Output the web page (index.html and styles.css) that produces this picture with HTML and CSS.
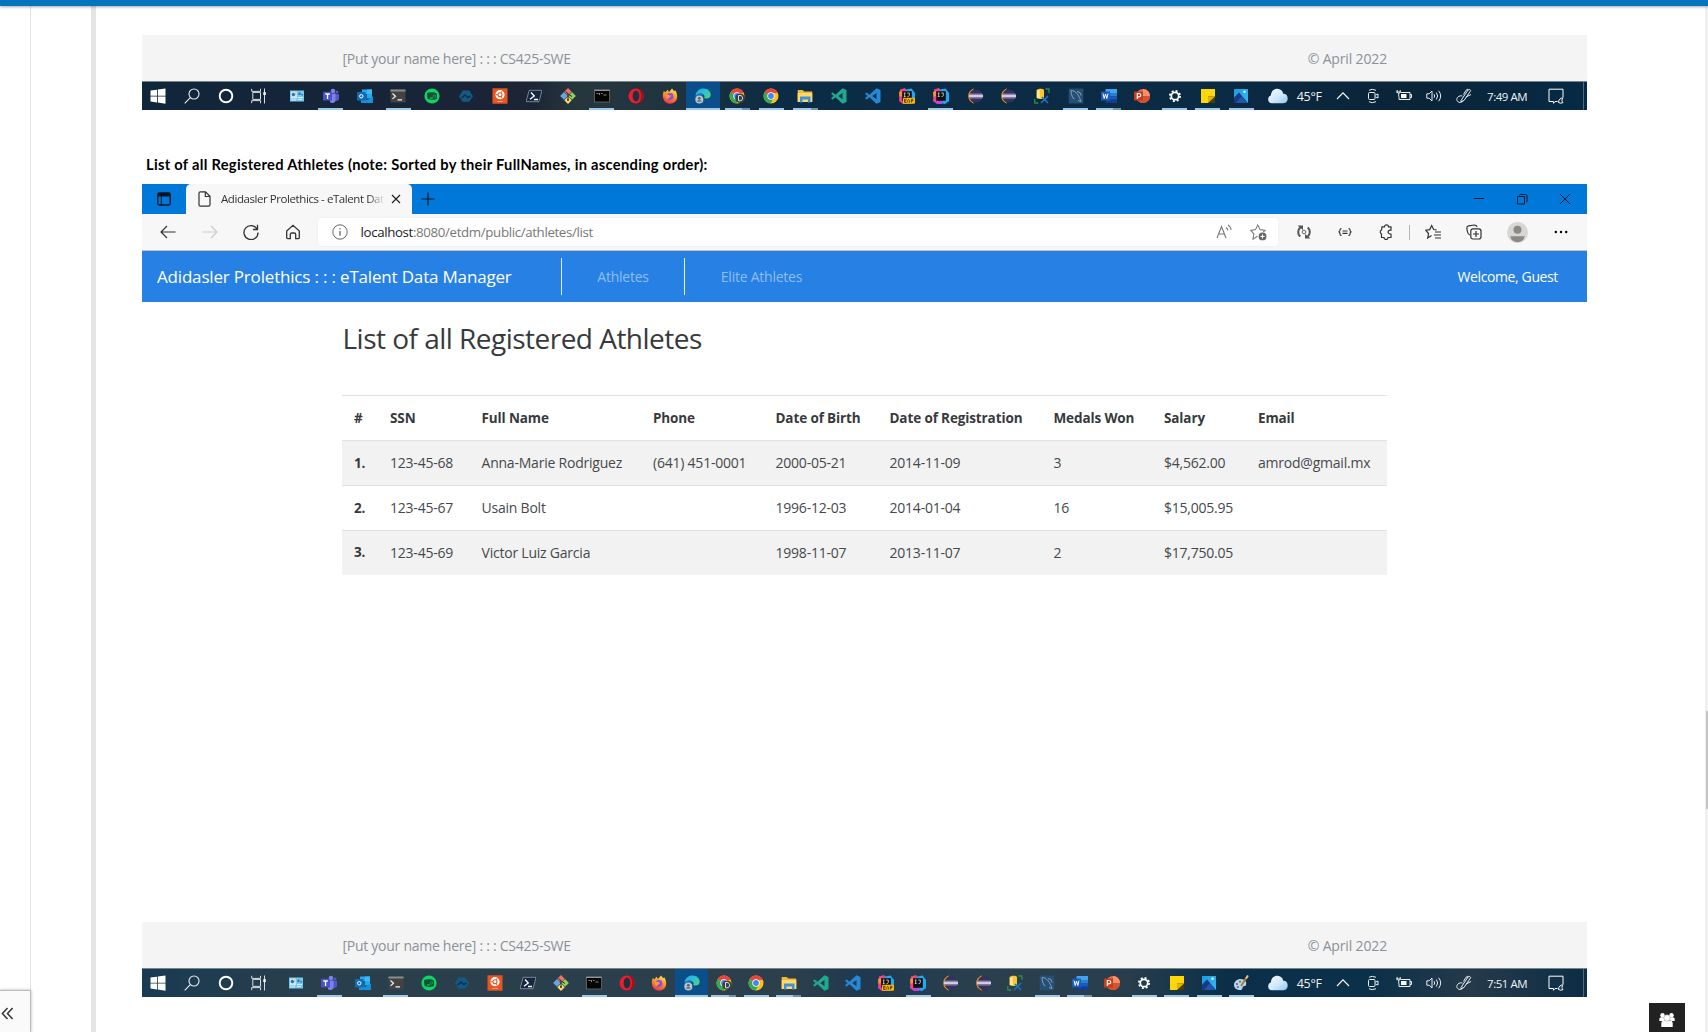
FILE: index.html
```html
<!DOCTYPE html>
<html lang="en">
<head>
<meta charset="utf-8">
<title>List of all Registered Athletes</title>
<link rel="stylesheet" href="styles.css">
</head>
<body>
<svg class="defs" aria-hidden="true">
  <defs>
    <linearGradient id="g-edge" x1="0" y1="0" x2="1" y2="1"><stop offset="0" stop-color="#1fa8e0"/><stop offset=".5" stop-color="#2cc3d5"/><stop offset="1" stop-color="#5fd65a"/></linearGradient>
    <linearGradient id="g-fox" x1="0.7" y1="0" x2="0.3" y2="1"><stop offset="0" stop-color="#ffe14a"/><stop offset=".5" stop-color="#ff8a2a"/><stop offset="1" stop-color="#f0304f"/></linearGradient>
    <linearGradient id="g-cloud" x1="0" y1="0" x2="1" y2="1"><stop offset="0" stop-color="#f4faff"/><stop offset=".55" stop-color="#cfe8fb"/><stop offset="1" stop-color="#8ec7f2"/></linearGradient>
    <linearGradient id="g-photo" x1="0" y1="0" x2="1" y2="1"><stop offset="0" stop-color="#1c9be0"/><stop offset="1" stop-color="#37b8f0"/></linearGradient>
  </defs>
  <symbol id="i-start" viewBox="0 0 16 16"><path fill="#fff" d="M.5 2.6 7 1.7v6H.5zM7.8 1.5 15.5.4v7.3H7.8zM.5 8.5H7v6l-6.5-.9zM7.8 8.5h7.7v7.2L7.8 14.6z"/></symbol>
  <symbol id="i-search" viewBox="0 0 16 16"><g fill="none" stroke="#e9edf0" stroke-width="1.1"><circle cx="10" cy="6" r="5"/><path d="M6.3 9.6.7 15.3"/></g></symbol>
  <symbol id="i-cortana" viewBox="0 0 16 16"><circle cx="8" cy="8" r="6.3" fill="none" stroke="#fff" stroke-width="1.9"/></symbol>
  <symbol id="i-tasks" viewBox="0 0 16 16"><path d="M.7.8v2.6h8.8V.8M.7 15.2v-2.6h8.8v2.6M1.8 4.4h7.700v7H1.800zM13.500.5v15" fill="none" stroke="#d8dde0" stroke-width="1"/><path d="M12.300 4.200h2.500v2.800h-2.500z" fill="#fff"/></symbol>
  <symbol id="i-card" viewBox="0 0 16 16"><rect x="1" y="2.500" width="14" height="11" fill="#79c6ee"/><rect x="2" y="3.500" width="6" height="7" fill="#c3e6f8"/><circle cx="4.500" cy="6.500" r="1.800" fill="#2c74b8"/><path d="M5 5.500 7.500 4v3z" fill="#f5c542"/><path d="M9.500 4.500h2v2.500h-2zM12.500 6h1.500v1.500h-1.500z" fill="#1f72b9"/><path d="M2 12h5M9 9.500h5M9 11.500h4" stroke="#d5effb"/></symbol>
  <symbol id="i-teams" viewBox="0 0 16 16"><circle cx="10" cy="3" r="2.300" fill="#7b83eb"/><circle cx="14" cy="4" r="1.500" fill="#5059c9"/><path d="M7 5.500h6v6a3.800 3.800 0 0 1-6 2.800z" fill="#7b83eb"/><path d="M12.500 6H16v4.500a2.500 2.500 0 0 1-3.500 2.300z" fill="#5059c9"/><rect y="3.800" width="9" height="8.700" rx=".6" fill="#4b53bc"/><path d="M2.300 6h4.500M4.550 6v5" stroke="#fff" stroke-width="1.300"/></symbol>
  <symbol id="i-outlook" viewBox="0 0 16 16"><path d="M5 1.500h10v9H5z" fill="#28a8ea"/><path d="M10 1.500h5v4.500h-5z" fill="#3cbcf5"/><path d="M5 6h5v4H5z" fill="#0364b8"/><path d="M4 8.200 10 12l6-3.800V15H4z" fill="#1490df"/><rect y="4" width="8.500" height="8.500" rx=".6" fill="#0f6cbd"/><circle cx="4.250" cy="8.250" r="1.700" fill="none" stroke="#fff" stroke-width="1"/></symbol>
  <symbol id="i-term" viewBox="0 0 16 16"><rect x=".5" y="1.500" width="15" height="13" fill="#434343"/><path d="M.5 1.500h15v2H.5z" fill="#8a8a8a"/><path d="m2.500 5.500 3 2.700-3 2.700M7.500 11.800h4.500" fill="none" stroke="#f3f3f3" stroke-width="1.200"/></symbol>
  <symbol id="i-green" viewBox="0 0 16 16"><circle cx="8" cy="8" r="7.600" fill="#0cd561"/><path d="M3 5.200C5 4 11 3.800 13 5.800v5C11 12.600 6 12 3.500 10.800z" fill="#10503a"/><path d="M6 10h3" stroke="#0cd561"/><circle cx="10.500" cy="8.200" r="1.200" fill="none" stroke="#0cae58" stroke-width=".8"/></symbol>
  <symbol id="i-hex" viewBox="0 0 16 16"><path d="M4.800 2.500h6.400L15 8.200l-3.800 5.600H4.800L1 8.200z" fill="#125a85"/><path d="M3.500 10 7 7l3 2.500 2.500-1.500" fill="none" stroke="#0b3048" stroke-width="1.500"/></symbol>
  <symbol id="i-ubuntu" viewBox="0 0 16 16"><rect x=".5" y=".3" width="15" height="15.400" fill="#e95420"/><circle cx="8" cy="6.700" r="4.600" fill="#fff"/><circle cx="8" cy="6.700" r="2" fill="none" stroke="#e95420" stroke-width="1.100"/><path d="M3.500 6.700h2.500M10.300 2.800 9 5M10.300 10.600 9 8.500" stroke="#e95420" stroke-width=".9"/><path d="M5 13.500h6" stroke="#f5a283"/></symbol>
  <symbol id="i-ps" viewBox="0 0 16 16"><path d="M3.200 2.300H16L13 13.700H0z" fill="#14273f" stroke="#8d9bab" stroke-width=".8"/><path d="m5 4.500 3.300 3.500L4 11.300M8 11.500h4" fill="none" stroke="#fff" stroke-width="1.300"/></symbol>
  <symbol id="i-git" viewBox="0 0 16 16"><path d="m8 0 3.700 3.700L8 7.400 4.300 3.700z" fill="#f0706a"/><path d="m4 4 3.800 3.900L4 11.800.1 7.900z" fill="#6ba4dd"/><path d="m12 4 3.900 3.900L12 11.800 8.200 7.900z" fill="#8fd05d"/><path d="m8 8.400 3.700 3.800L8 16l-3.700-3.800z" fill="#ffd96a"/><path d="M6 3.500 8 6v6M8 6l4 2.500" stroke="#2a2a2a" fill="none"/><circle cx="8" cy="12" r="1" fill="#2a2a2a"/></symbol>
  <symbol id="i-cmd" viewBox="0 0 16 16"><rect x=".5" y="2" width="15" height="12" fill="#050505" stroke="#6b6b6b" stroke-width=".8"/><path d="M.5 2.300h15" stroke="#b0b0b0"/><path d="M2.500 5.500h2M5.500 5v2M7 5.500h1.500M9.500 7h3" stroke="#aaa" stroke-width=".8"/></symbol>
  <symbol id="i-opera" viewBox="0 0 16 16"><circle cx="8" cy="8" r="7.500" fill="#ee1c2f"/><path d="M10 .8A7.500 7.500 0 0 1 10 15.200C14 11 14 5 10 .8" fill="#b00b18"/><ellipse cx="8" cy="8" rx="3.400" ry="5.400" fill="#1c303d"/></symbol>
  <symbol id="i-fox" viewBox="0 0 16 16"><path d="M1.800 3 3.500 4.300 5.500 1.800 7 4l3-3.500 2 2.500 1.500-.5C17 9 15 15.500 8 15.700 2 15.500-.8 9 1.800 3" fill="url(#g-fox)"/><circle cx="8" cy="8.500" r="3.400" fill="#8b4fe0"/><path d="M3 6.500c3-1 3 1 6 1-1 3-3 2-4 4z" fill="#ff9a2e"/></symbol>
  <symbol id="i-edge" viewBox="0 0 16 16"><path d="M.6 8C.7 3 4.500.4 8.500.4c4.300 0 7.200 3 7.200 6.300 0 3-2.600 4-5 3.800-2-.3-1.500-1.300-1-2C9.300 5.500 5 4.300.6 8" fill="url(#g-edge)"/><path d="M.6 8C3 4.500 7.500 4.500 8 7c-3 1-2.500 5 1.500 6.500-3.500 3.500-9.500 1-8.900-5.500" fill="#176fc0"/><circle cx="4.300" cy="11.500" r="4" fill="#b9c2cb"/><circle cx="4.300" cy="10.300" r="1.400" fill="#59646e"/><path d="M1.900 13.800c.4-2.500 4.400-2.500 4.800 0z" fill="#69747e"/></symbol>
  <symbol id="i-chrome" viewBox="0 0 16 16"><circle cx="8" cy="8" r="7.500" fill="#fbc116"/><path d="M8 8 1.500 4.300A7.500 7.500 0 0 1 14.500 4.300L15 5H8z" fill="#e8453c"/><path d="M1.500 4.300A7.500 7.500 0 0 0 7.500 15.500L10.800 9.700 8 8z" fill="#34a853"/><circle cx="8" cy="8" r="3.700" fill="#fff"/><circle cx="8" cy="8" r="2.900" fill="#4285f4"/></symbol>
  <symbol id="i-chromed" viewBox="0 0 16 16"><use href="#i-chrome"/><circle cx="11" cy="10.200" r="4.800" fill="#394148"/><path d="M9.500 7.500h1.500c3.500 0 3.500 5.300 0 5.300H9.500z" fill="none" stroke="#ddd" stroke-width="1"/></symbol>
  <symbol id="i-folder" viewBox="0 0 16 16"><path d="M.7 2h5l1.500 1.500h8V14H.7z" fill="#f3b73a"/><path d="M.7 5h14.600v9H.7z" fill="#ffd968"/><path d="M3 8.500h10.500V14.500H11V11.500H5.500v3H3z" fill="#3c93dc"/></symbol>
  <symbol id="i-code" viewBox="0 0 16 16"><path d="M11.500.3 15.500 2v12l-4 1.700-7-6.400L1.700 11.600.3 10.800V10L2.500 8 .3 6v-.8l1.400-.8L4.500 6.700zM11.500 5 7.300 8l4.200 3.200z" fill-rule="evenodd" fill="currentColor"/></symbol>
  <symbol id="i-ij" viewBox="0 0 16 16"><path d="M1 1.500 6 0l2 3-4 13-4-3z" fill="#f0438c"/><path d="M7 1.500 12.500.5 16 5v8l-4 3-5-1z" fill="#23a7f2"/><path d="M3 13h7l-1 3H4z" fill="#b546e0"/><path d="M0 4 3 3v5L.5 9z" fill="#fb8f3d"/><rect x="3.200" y="3.200" width="9.600" height="9.600" fill="#111"/><path d="M4.800 5h1.800M5.700 5v3.500M4.800 8.500h1.800M8.300 5h2v2.500q0 1-1.800 1" fill="none" stroke="#ddd" stroke-width=".8"/></symbol>
  <symbol id="i-eap" viewBox="0 0 16 16"><use href="#i-ij"/><rect x="4" y="9.800" width="12" height="6" rx="1" fill="#ffb800"/><path d="M7.700 11.200H5.600v3.200h2.100M5.600 12.800h1.800M8.800 14.500v-2l.9-1.200.9 1.200v2M12.400 14.500v-3.200h1.500v1.600h-1.500" fill="none" stroke="#3c2a00" stroke-width=".8"/></symbol>
  <symbol id="i-eclipse" viewBox="0 0 16 16"><path d="M6.500 1A7.500 7.500 0 0 0 6.500 15 8.500 8.500 0 0 1 6.500 1" fill="#f59a23" stroke="#e98c18" stroke-width=".9"/><circle cx="9" cy="8" r="6.600" fill="#35305f"/><path d="M2.800 5.800h12.400" stroke="#6f6a96" stroke-width="1"/><path d="M2 8h14" stroke="#d0cde0" stroke-width="3"/><path d="M2.800 10.300h12.400" stroke="#6f6a96" stroke-width="1"/></symbol>
  <symbol id="i-db" viewBox="0 0 16 16"><path d="M2.500 2C5 0 9 .5 10 1.800v8C8 11.500 4.500 11.300 2.500 10z" fill="#ffc62b"/><path d="M3 2.500h3v7.500H3z" fill="#ffe691"/><path d="M11.500 1H15v4M.8 11v4h3.500" fill="none" stroke="#2c8a4a" stroke-width="1.300"/><path d="m7 15 7-7M8 9l6 6" stroke="#1b74c4" stroke-width="1.500"/></symbol>
  <symbol id="i-mysql" viewBox="0 0 16 16"><rect x=".7" y=".5" width="14.600" height="15" fill="#254f75"/><path d="M3 2.500c5 0 8 5 10 11l-3-1M3 2.500c0 4 1 5 2 7.500l1.500 1M9 3.500l3 1 1 3" fill="none" stroke="#a9c2d2" stroke-width=".7"/></symbol>
  <symbol id="i-word" viewBox="0 0 16 16"><path d="M4.500 1H16v4.700H4.500z" fill="#41a5ee"/><path d="M4.500 5H16v3.500H4.500z" fill="#2b7cd3"/><path d="M4.500 8.500H16v3.300H4.500z" fill="#185abd"/><path d="M4.500 11.500H16V15H4.500z" fill="#103f91"/><rect y="3.500" width="9" height="9" rx=".6" fill="#185abd"/><path d="m2 5.500 1.200 5L4.500 6l1.300 4.500 1.200-5" fill="none" stroke="#fff" stroke-width="1"/></symbol>
  <symbol id="i-ppt" viewBox="0 0 16 16"><circle cx="9" cy="8" r="7" fill="#ed6c47"/><path d="M9 1a7 7 0 0 1 7 7H9z" fill="#ff8f6b"/><path d="M2 8h14a7 7 0 0 1-14 0" fill="#d35230"/><rect y="3.500" width="9" height="9" rx=".6" fill="#c43e1c"/><path d="M3.300 11V5.500H5q1.800.2 1.800 1.700T5 8.900H3.300" fill="none" stroke="#fff" stroke-width="1.200"/></symbol>
  <symbol id="i-gear" viewBox="0 0 16 16"><circle cx="8" cy="8" r="3.700" fill="none" stroke="#fff" stroke-width="1.700"/><circle cx="8" cy="8" r="5.100" fill="none" stroke="#fff" stroke-width="1.800" stroke-dasharray="2 2.005"/></symbol>
  <symbol id="i-sticky" viewBox="0 0 16 16"><path d="M1 1h14v14H1z" fill="#ffd60a"/><path d="M8 8.500h7V15H8z" fill="#4a3d06"/><path d="M8 8.500h7L8 15z" fill="#e0b400"/></symbol>
  <symbol id="i-photo" viewBox="0 0 16 16"><path d="M1 1h14v14H1z" fill="url(#g-photo)"/><path d="m1 9.500 5-5L15 15H1z" fill="#163b83"/><path d="m6 4.500 3 3.500L3 15h11z" fill="#2455ac"/><circle cx="11.500" cy="3.800" r="1.300" fill="#e4f5ff"/></symbol>
  <symbol id="i-paint" viewBox="0 0 16 16"><path d="M7.500 4C12 4 14 7 13 10c-.5 1.500-2 .7-3 1.500s.3 3.500-3 3.500C3 15 .8 12.500 1 9.500S4 4 7.500 4" fill="#b5d6ec"/><circle cx="4" cy="9" r="1.100" fill="#d8403a"/><circle cx="7" cy="6.700" r="1.100" fill="#3e9b4f"/><circle cx="4.800" cy="12" r="1.100" fill="#2d74c9"/><path d="m8 11 6-9" stroke="#b37332" stroke-width="1.800"/><path d="m13 3.500 2-3" stroke="#f3c27a" stroke-width="2"/></symbol>
  <symbol id="i-cloud" viewBox="0 0 20 15"><path d="M4.500 14.500a4 4 0 0 1-.8-7.700C4 2.500 7 .5 10 .6c3 .1 5 2 5.300 4.400a4.800 4.800 0 0 1 .5 9.500z" fill="url(#g-cloud)"/></symbol>
  <symbol id="i-up" viewBox="0 0 16 16"><path d="m2 11 6-6.200L14 11" fill="none" stroke="#fff" stroke-width="1.100"/></symbol>
  <symbol id="i-meet" viewBox="0 0 16 16"><g fill="none" stroke="#e8edf0"><rect x="3.500" y="4.500" width="6.500" height="7" rx="1"/><path d="m10.500 7 2.500-1v4l-2.500-1M4 2.300q3-2 7 0M4 13.700q3 2 7 0"/></g></symbol>
  <symbol id="i-batt" viewBox="0 0 16 16"><path d="M5 4.500h9v7H3V8.500M14 6.500h1.500v3h-1.500" fill="none" stroke="#e8edf0"/><path d="M5 6h5.500v4H5z" fill="#fff"/><path d="M1.200 2v2.500q1.500 1.500 3 0V2M2.700 5v3.500M0 4h5" fill="none" stroke="#e8edf0"/></symbol>
  <symbol id="i-vol" viewBox="0 0 16 16"><path d="M.8 5.800h2.400L6 3v10L3.200 10.200H.8zM8 6.200q1.300 1.800 0 3.600M10.300 4.500q2.700 3.500 0 7M12.700 2.800q4 5.200 0 10.400" fill="none" stroke="#e8edf0"/></symbol>
  <symbol id="i-pen" viewBox="0 0 16 16"><path d="M5 12.500 12 2q2-1.500 2.700.6L8 12.500l-3 1.300zM7.500 6.500Q10 1 12 1M6.500 8C3 7 0 10 1 12.500s5 2.500 6 0M10 9l5-2.500" fill="none" stroke="#e8edf0" stroke-width="1"/></symbol>
  <symbol id="i-note" viewBox="0 0 16 16"><path d="M9.500 13.500H7l-1.500 1.800v-1.800H1V1.200h14V9" fill="none" stroke="#fff"/><path d="M10.500 14.500a4.500 4.500 0 0 1 4.700-4.700 3 3 0 0 0-.2 4.700q-2 1.500-4.500 0" fill="none" stroke="#fff"/></symbol>
</svg>

<div class="topbar"></div>
<div class="shell">
  <aside class="rail"><button class="expand" aria-label="Expand"><svg viewBox="0 0 14 14"><path d="M7 1 1.500 7 7 13M12.500 1 7 7l5.500 6" fill="none" stroke="#333" stroke-width="1.600"/></svg></button></aside>
  <div class="gutter"></div>
  <main class="doc">
    <footer class="foot"><span>[Put your name here] : : : CS425-SWE</span><span class="copy">© April 2022</span></footer>
    <div class="taskbar taskbar-a">
      <div class="sys"><svg><use href="#i-start"/></svg><svg><use href="#i-search"/></svg><svg><use href="#i-cortana"/></svg><svg><use href="#i-tasks"/></svg></div>
      <div class="apps">
        <i><svg><use href="#i-card"/></svg></i><i class="on"><svg><use href="#i-teams"/></svg></i><i><svg><use href="#i-outlook"/></svg></i><i class="on"><svg><use href="#i-term"/></svg></i><i><svg><use href="#i-green"/></svg></i><i><svg><use href="#i-hex"/></svg></i><i><svg><use href="#i-ubuntu"/></svg></i><i><svg><use href="#i-ps"/></svg></i><i><svg><use href="#i-git"/></svg></i><i class="on"><svg><use href="#i-cmd"/></svg></i><i><svg><use href="#i-opera"/></svg></i><i><svg><use href="#i-fox"/></svg></i><i class="on active"><svg><use href="#i-edge"/></svg></i><i class="on multi"><svg><use href="#i-chromed"/></svg></i><i class="on"><svg><use href="#i-chrome"/></svg></i><i class="on multi"><svg><use href="#i-folder"/></svg></i><i class="teal"><svg><use href="#i-code"/></svg></i><i class="blue"><svg><use href="#i-code"/></svg></i><i><svg><use href="#i-eap"/></svg></i><i class="on"><svg><use href="#i-ij"/></svg></i><i><svg><use href="#i-eclipse"/></svg></i><i><svg><use href="#i-eclipse"/></svg></i><i><svg><use href="#i-db"/></svg></i><i class="on"><svg><use href="#i-mysql"/></svg></i><i class="on multi"><svg><use href="#i-word"/></svg></i><i><svg><use href="#i-ppt"/></svg></i><i class="on"><svg><use href="#i-gear"/></svg></i><i class="on"><svg><use href="#i-sticky"/></svg></i><i class="on"><svg><use href="#i-photo"/></svg></i>
      </div>
      <div class="tray"><svg class="cloud"><use href="#i-cloud"/></svg><span class="temp">45°F</span><div class="status"><svg><use href="#i-up"/></svg><svg><use href="#i-meet"/></svg><svg><use href="#i-batt"/></svg><svg><use href="#i-vol"/></svg><svg><use href="#i-pen"/></svg></div><span class="time">7:49 AM</span><svg><use href="#i-note"/></svg></div>
    </div>

    <p class="caption">List of all Registered Athletes (note: Sorted by their FullNames, in ascending order):</p>

    <div class="tabs">
      <div class="tab-menu"><svg viewBox="0 0 14 14"><rect x=".8" y="1" width="12.400" height="12" rx="1.800" fill="none" stroke="#0a1420" stroke-width="1.300"/><path d="M.8 1h12.400v3.500H.8z" fill="#0a1420"/><path d="M4.300 4v9" stroke="#0a1420"/></svg></div>
      <div class="tab"><svg class="page" viewBox="0 0 13 16"><path d="M1 2.200Q1 .8 2.400.8H7.500L12 5.300v8.500q0 1.400-1.400 1.400H2.400Q1 15.200 1 13.800zM7.300 1v4.500H12" fill="none" stroke="#333" stroke-width="1.200"/></svg><span>Adidasler Prolethics - eTalent Dat</span><svg class="x" viewBox="0 0 10 10"><path d="m1 1 8 8M9 1 1 9" stroke="#222" stroke-width="1.200"/></svg></div>
      <svg class="plus" viewBox="0 0 14 14"><path d="M7 .5v13M.5 7h13" stroke="#06182a" stroke-width="1.200"/></svg>
      <div class="win"><svg viewBox="0 0 12 12"><path d="M1 5.500h10" stroke="#06182a"/></svg><svg viewBox="0 0 12 12"><path d="M1.500 3.500h7v7.500h-7zM3.500 2.500q0-1 1-1H9.500q1.500 0 1.500 1.500v5q0 1-1 1" fill="none" stroke="#06182a"/></svg><svg viewBox="0 0 12 12"><path d="m1 1 10 10M11 1 1 11" stroke="#06182a"/></svg></div>
    </div>
    <div class="toolbar">
      <div class="nav-icons">
        <svg viewBox="0 0 16 16"><path d="M15.500 8H1M7 2 1 8l6 6" fill="none" stroke="#333" stroke-width="1.200"/></svg>
        <svg viewBox="0 0 16 16"><path d="M.5 8H15M9 2l6 6-6 6" fill="none" stroke="#ccc" stroke-width="1.200"/></svg>
        <svg viewBox="0 0 16 16"><path d="M14 5A7 7 0 1 0 15 8.500M14.500.8v4.700H10" fill="none" stroke="#333" stroke-width="1.300"/></svg>
        <svg viewBox="0 0 16 16"><path d="M1.700 7 8 1.300 14.300 7v6.500q0 1.200-1.200 1.200h-2.400V10.500q0-1.500-1.500-1.500H6.800q-1.500 0-1.500 1.500v4.200H2.900q-1.200 0-1.200-1.200z" fill="none" stroke="#333" stroke-width="1.300"/></svg>
      </div>
      <div class="address">
        <svg viewBox="0 0 16 16"><circle cx="8" cy="8" r="7.200" fill="none" stroke="#666"/><path d="M8 7v4.800M8 4.200v1.300" stroke="#555" stroke-width="1.200"/></svg>
        <span class="url"><b>localhost</b>:8080/etdm/public/athletes/list</span>
        <svg viewBox="0 0 16 16"><path d="m1 14 4.500-11.500L10 14M2.700 10h5.700M10 3.500q1.800 1.300 1.800 3M12 1q3 2 3 5" fill="none" stroke="#777" stroke-width="1.100"/></svg>
        <svg class="star" viewBox="0 0 16 16"><path d="m7 11.500-4.200 2.700.8-4.900L.8 6l4.400-.7L7.300 1l2.200 4.300 4.700.7-1.700 1.600" fill="none" stroke="#777" stroke-width="1"/><circle cx="11.800" cy="11.700" r="3.700" fill="#666"/><path d="M11.800 9.700v4M9.800 11.700h4" stroke="#fff" stroke-width=".9"/></svg>
      </div>
      <div class="tools">
        <svg viewBox="0 0 16 16"><path d="M5.500 2.800A5.800 5.800 0 0 0 4.300 12.500M10.500 13.200A5.800 5.800 0 0 0 11.700 3.500" fill="none" stroke="#555" stroke-width="1.900"/><path d="M1.500 1.500H7V6zM14.500 14.500H9V10z" fill="#555"/><circle cx="8" cy="8" r="1.800" fill="none" stroke="#555" stroke-width=".9"/></svg>
        <svg viewBox="0 0 16 16"><path d="M4.500 4.500q-1.500 0-1.500 1.500T1.500 8Q3 8 3 9.800t1.500 1.500M11.500 4.500Q13 4.500 13 6t1.500 2Q13 8 13 9.800t-1.500 1.500M5.500 7h5M5.500 9.300h5" fill="none" stroke="#333" stroke-width="1.200"/></svg>
        <svg viewBox="0 0 16 16"><path d="M4 2.800h2.500a2 2 0 0 1 4 0H13v3.400h-1a1.900 1.900 0 1 0 0 3.800h1v3.500H10a2 2 0 0 1-4 0H3.500V10a2.200 2.200 0 0 1 0-4z" fill="none" stroke="#333" stroke-width="1.200"/></svg>
        <span class="sep"></span>
        <svg viewBox="0 0 16 16"><path d="m6.500 11.500-3.800 2.500.8-4.500L.7 6.200l4-.6L6.700 1.500l2 4 3 .5M10 8h6M9 11h7M10 14h6" fill="none" stroke="#333" stroke-width="1.200"/></svg>
        <svg viewBox="0 0 16 16"><path d="M4 11Q2 10.500 1.500 8L.8 4Q.8 2.200 2.500 1.800L8.500 1q2 0 2.500 2" fill="none" stroke="#333" stroke-width="1.200"/><rect x="4.800" y="4.800" width="10.200" height="10.200" rx="2.200" fill="none" stroke="#333" stroke-width="1.200"/><path d="M10 7v6M7 10h6" stroke="#333" stroke-width="1.200"/></svg>
        <svg class="avatar" viewBox="0 0 22 22"><circle cx="11" cy="11" r="11" fill="#d8d6d3"/><circle cx="11" cy="8" r="4.200" fill="#8c8883"/><path d="M3.500 15h15q-1 6-7.500 6.200Q4.500 21 3.500 15" fill="#8c8883"/></svg>
        <svg viewBox="0 0 16 16"><circle cx="2.800" cy="8" r="1.200"/><circle cx="8" cy="8" r="1.200"/><circle cx="13.200" cy="8" r="1.200"/></svg>
      </div>
    </div>
    <nav class="navbar">
      <span class="brand">Adidasler Prolethics : : : eTalent Data Manager</span>
      <a class="link first">Athletes</a>
      <a class="link">Elite Athletes</a>
      <span class="welcome">Welcome, Guest</span>
    </nav>
    <section class="content">
      <h1>List of all Registered Athletes</h1>
      <table>
        <colgroup><col class="c1"><col class="c2"><col class="c3"><col class="c4"><col class="c5"><col class="c6"><col class="c7"><col class="c8"><col></colgroup>
        <thead><tr><th>#</th><th>SSN</th><th>Full Name</th><th>Phone</th><th>Date of Birth</th><th>Date of Registration</th><th>Medals Won</th><th>Salary</th><th>Email</th></tr></thead>
        <tbody>
          <tr><th>1.</th><td>123-45-68</td><td>Anna-Marie Rodriguez</td><td>(641) 451-0001</td><td>2000-05-21</td><td>2014-11-09</td><td>3</td><td>$4,562.00</td><td>amrod@gmail.mx</td></tr>
          <tr><th>2.</th><td>123-45-67</td><td>Usain Bolt</td><td></td><td>1996-12-03</td><td>2014-01-04</td><td>16</td><td>$15,005.95</td><td></td></tr>
          <tr><th>3.</th><td>123-45-69</td><td>Victor Luiz Garcia</td><td></td><td>1998-11-07</td><td>2013-11-07</td><td>2</td><td>$17,750.05</td><td></td></tr>
        </tbody>
      </table>
    </section>
    <footer class="foot"><span>[Put your name here] : : : CS425-SWE</span><span class="copy">© April 2022</span></footer>
    <div class="taskbar taskbar-b">
      <div class="sys"><svg><use href="#i-start"/></svg><svg><use href="#i-search"/></svg><svg><use href="#i-cortana"/></svg><svg><use href="#i-tasks"/></svg></div>
      <div class="apps">
        <i><svg><use href="#i-card"/></svg></i><i class="on"><svg><use href="#i-teams"/></svg></i><i><svg><use href="#i-outlook"/></svg></i><i class="on"><svg><use href="#i-term"/></svg></i><i><svg><use href="#i-green"/></svg></i><i><svg><use href="#i-hex"/></svg></i><i><svg><use href="#i-ubuntu"/></svg></i><i><svg><use href="#i-ps"/></svg></i><i><svg><use href="#i-git"/></svg></i><i class="on"><svg><use href="#i-cmd"/></svg></i><i><svg><use href="#i-opera"/></svg></i><i><svg><use href="#i-fox"/></svg></i><i class="on active"><svg><use href="#i-edge"/></svg></i><i class="on multi"><svg><use href="#i-chromed"/></svg></i><i class="on"><svg><use href="#i-chrome"/></svg></i><i class="on multi"><svg><use href="#i-folder"/></svg></i><i class="teal"><svg><use href="#i-code"/></svg></i><i class="blue"><svg><use href="#i-code"/></svg></i><i><svg><use href="#i-eap"/></svg></i><i class="on"><svg><use href="#i-ij"/></svg></i><i><svg><use href="#i-eclipse"/></svg></i><i><svg><use href="#i-eclipse"/></svg></i><i><svg><use href="#i-db"/></svg></i><i class="on"><svg><use href="#i-mysql"/></svg></i><i class="on multi"><svg><use href="#i-word"/></svg></i><i><svg><use href="#i-ppt"/></svg></i><i class="on"><svg><use href="#i-gear"/></svg></i><i class="on"><svg><use href="#i-sticky"/></svg></i><i class="on"><svg><use href="#i-photo"/></svg></i><i class="on"><svg><use href="#i-paint"/></svg></i>
      </div>
      <div class="tray"><svg class="cloud"><use href="#i-cloud"/></svg><span class="temp">45°F</span><div class="status"><svg><use href="#i-up"/></svg><svg><use href="#i-meet"/></svg><svg><use href="#i-batt"/></svg><svg><use href="#i-vol"/></svg><svg><use href="#i-pen"/></svg></div><span class="time">7:51 AM</span><svg><use href="#i-note"/></svg></div>
    </div>
  </main>
  <div class="scroll"><div class="thumb"></div></div>
</div>
<div class="people"><svg viewBox="0 0 16 14"><g fill="#fff"><circle cx="3.500" cy="2.300" r="2.200"/><circle cx="12.500" cy="2.300" r="2.200"/><path d="M.3 8V6q0-1.800 2-1.800h3V8zM15.700 8V6q0-1.800-2-1.800h-3V8zM2.300 14v-3.500Q2.300 7.500 5 7.500h6q2.700 0 2.700 3V14z"/><circle cx="8" cy="5" r="3.200" stroke="#999" stroke-width=".5"/></g></svg></div>
</body>
</html>
```
FILE: styles.css
```css
* { box-sizing: border-box; }
body { margin: 0; height: 1032px; overflow: hidden; background: #fff; font-family: "Open Sans", "Noto Sans", sans-serif; display: flex; flex-direction: column; position: relative; }
svg { display: block; flex: none; }
.defs { position: absolute; width: 0; height: 0; }
.topbar { height: 6px; flex: none; background: #0374bf; box-shadow: 0 1px 3px rgba(0,0,0,.35); z-index: 1; }
.shell { flex: 1; display: flex; min-height: 0; }

.rail { width: 31px; border-right: 1px solid #e4e4e4; display: flex; flex-direction: column; justify-content: flex-end; }
.expand { width: 31px; height: 42px; padding: 4px 0 0 1px; border: 0; border-top: 1px solid #bbb; border-right: 1px solid #bbb; background: #fafafa; box-shadow: 0 0 3px rgba(0,0,0,.3); display: flex; align-items: center; }
.expand svg { width: 13px; height: 13px; }
.gutter { width: 65px; border-right: 5px solid #e4e4e4; }
.doc { width: 1491px; padding: 29px 0 0 46px; display: flex; flex-direction: column; }
.scroll { margin-left: auto; width: 3px; background: #f0f0f0; padding-top: 705px; }
.thumb { height: 98px; margin-left: 1px; background: #c4c4c4; }

.foot { height: 46px; flex: none; padding: 0 200px 0 200.500px; background: #f4f4f4; display: flex; justify-content: space-between; align-items: center; color: #8a9299; font-size: 14px; letter-spacing: -.27px; }
.copy { letter-spacing: -.15px; }

.taskbar { height: 29px; flex: none; border-top: 1px solid #75858c; display: flex; color: #f0f3f5; }
.taskbar-a { background: linear-gradient(90deg, #10263a 0, #182438 18%, #1c2435 27%, #26363d 30%, #20343f 36%, #0c2b44 44%, #0b2a43 75%, #0a2438 88%, #062a45 100%); }
.taskbar-b { background: linear-gradient(90deg, #193a53 0, #2a3f4c 12%, #2b3f4d 45%, #20394f 50%, #2a404e 58%, #283e4c 68%, #0c2f49 75%, #0b3049 85%, #253a4a 92%, #0c2d45 100%); }
.sys { width: 137.800px; flex: none; display: flex; align-items: center; gap: 17.800px; padding-left: 8px; }
.sys svg { width: 16px; height: 16px; }
.apps { width: 978px; flex: none; display: flex; }
.apps i { flex: none; width: 33.900px; display: flex; flex-direction: column; align-items: center; padding-top: 5.500px; }
.apps i:nth-child(n+24) { width: 33.050px; }
.taskbar-b .apps i { width: 32.350px; }
.taskbar-b .apps i:nth-child(-n+10) { width: 33.100px; }
.apps i svg { width: 16px; height: 16px; }
.apps .on::after { content: ""; width: 25px; height: 2px; margin-top: 4.500px; background: #9cc8ee; }
.apps .multi::after { background: linear-gradient(90deg, #9cc8ee 70%, #7193b0 70%); }
.apps .active { background: #0a4f8a; }
.apps .active::after { width: 100%; }
.teal { color: #1fa98d; }
.blue { color: #2489d8; }
.tray { flex: 1; display: flex; align-items: center; padding-left: 9px; margin-right: 3px; border-right: 1px solid #50697a; font-size: 12.500px; }
.tray svg { width: 16px; height: 16px; }
.tray .cloud { width: 21px; height: 16px; }
.temp { width: 28px; margin-left: 9px; letter-spacing: -.35px; white-space: nowrap; }
.status { display: flex; gap: 14.200px; margin-left: 10.500px; }
.time { width: 42px; margin: 0 18.500px 0 15px; font-size: 11.500px; letter-spacing: -.45px; white-space: nowrap; }

.caption { margin: 0; height: 74px; padding: 42px 0 0 4px; flex: none; font: 700 14.700px/24px Lato, sans-serif; letter-spacing: .29px; color: #000; white-space: nowrap; }

.tabs { height: 30px; flex: none; background: #0078d9; display: flex; }
.tab-menu { width: 44px; display: flex; justify-content: center; align-items: center; }
.tab-menu svg { width: 14px; height: 14px; }
.tab { width: 226px; background: #f7f7f7; border-radius: 5px 5px 0 0; display: flex; align-items: center; padding-left: 12px; font-size: 11.500px; color: #333; }
.page { width: 13px; height: 16px; }
.tab span { width: 164px; margin-left: 10px; padding-bottom: 2px; white-space: nowrap; letter-spacing: -.43px; -webkit-mask-image: linear-gradient(90deg, #000 90%, transparent); mask-image: linear-gradient(90deg, #000 90%, transparent); }
.x { width: 10px; height: 10px; margin-left: 6px; }
.plus { width: 14px; height: 14px; margin: 7.500px 0 0 9px; }
.win { margin: 9px 16px 0 auto; display: flex; gap: 31px; }
.win svg { width: 12px; height: 12px; }

.toolbar { height: 37px; flex: none; background: #f7f7f7; border-bottom: 1px solid #c5c3c0; display: flex; align-items: center; }
.nav-icons { display: flex; gap: 25.500px; padding-left: 18px; width: 176px; }
.nav-icons svg { width: 16px; height: 16px; }
.address { width: 960px; height: 28px; border-radius: 4px; background: #fff; box-shadow: 0 0 3px rgba(0,0,0,.06); display: flex; align-items: center; padding: 0 11px 0 14px; }
.address svg { width: 16px; height: 16px; }
.url { flex: 1; margin-left: 12.500px; font-size: 13.300px; letter-spacing: -.36px; color: #777; }
.url b { font-weight: 400; color: #1b1b1b; }
.address .star { margin-left: 18px; width: 17px; height: 17px; }
.tools { flex: 1; display: flex; align-items: center; justify-content: space-between; padding: 0 18px 0 18px; }
.tools svg { width: 16px; height: 16px; }
.tools .avatar { width: 21px; height: 21px; }
.sep { width: 1px; height: 15px; background: #b5b5b5; margin: 0 -10px; }

.navbar { height: 51px; flex: none; background: #2780e3; display: flex; align-items: center; padding: 0 29px 0 15px; color: #fff; font-size: 14px; }
.brand { width: 404px; font-size: 17px; letter-spacing: -.18px; white-space: nowrap; }
.link { height: 37px; width: 123px; border-left: 1px solid #e4effb; color: #8fbdf0; display: flex; align-items: center; justify-content: center; white-space: nowrap; letter-spacing: -.24px; }
.link:nth-of-type(2) { width: 154px; }
.welcome { margin-left: auto; letter-spacing: -.38px; }

.content { height: 620px; flex: none; padding: 16px 200px 0; color: #373a3c; }
h1 { margin: 0; height: 77px; padding-left: .5px; font-weight: 400; font-size: 28px; line-height: 40px; letter-spacing: -.52px; }
table { width: 1045px; table-layout: fixed; border-collapse: collapse; font-size: 14px; letter-spacing: -.22px; }
.c1 { width: 36px; } .c2 { width: 91.500px; } .c3 { width: 171.500px; } .c4 { width: 122.500px; } .c5 { width: 114px; } .c6 { width: 164px; } .c7 { width: 110.500px; } .c8 { width: 94px; }
th, td { height: 45px; padding: 0 0 1px 12px; text-align: left; border-top: 1px solid #dee2e6; white-space: nowrap; }
td { color: #45494c; }
th { font-weight: 700; font-size: 13.500px; letter-spacing: -.12px; }
tbody tr:nth-child(n+3) > * { height: 44px; }
tbody tr:nth-child(odd) { background: #f2f2f2; }
.people { position: absolute; left: 1649px; top: 1003px; width: 36px; height: 29px; background: #222; display: flex; justify-content: center; padding-top: 10px; }
.people svg { width: 16px; height: 14px; }
```
